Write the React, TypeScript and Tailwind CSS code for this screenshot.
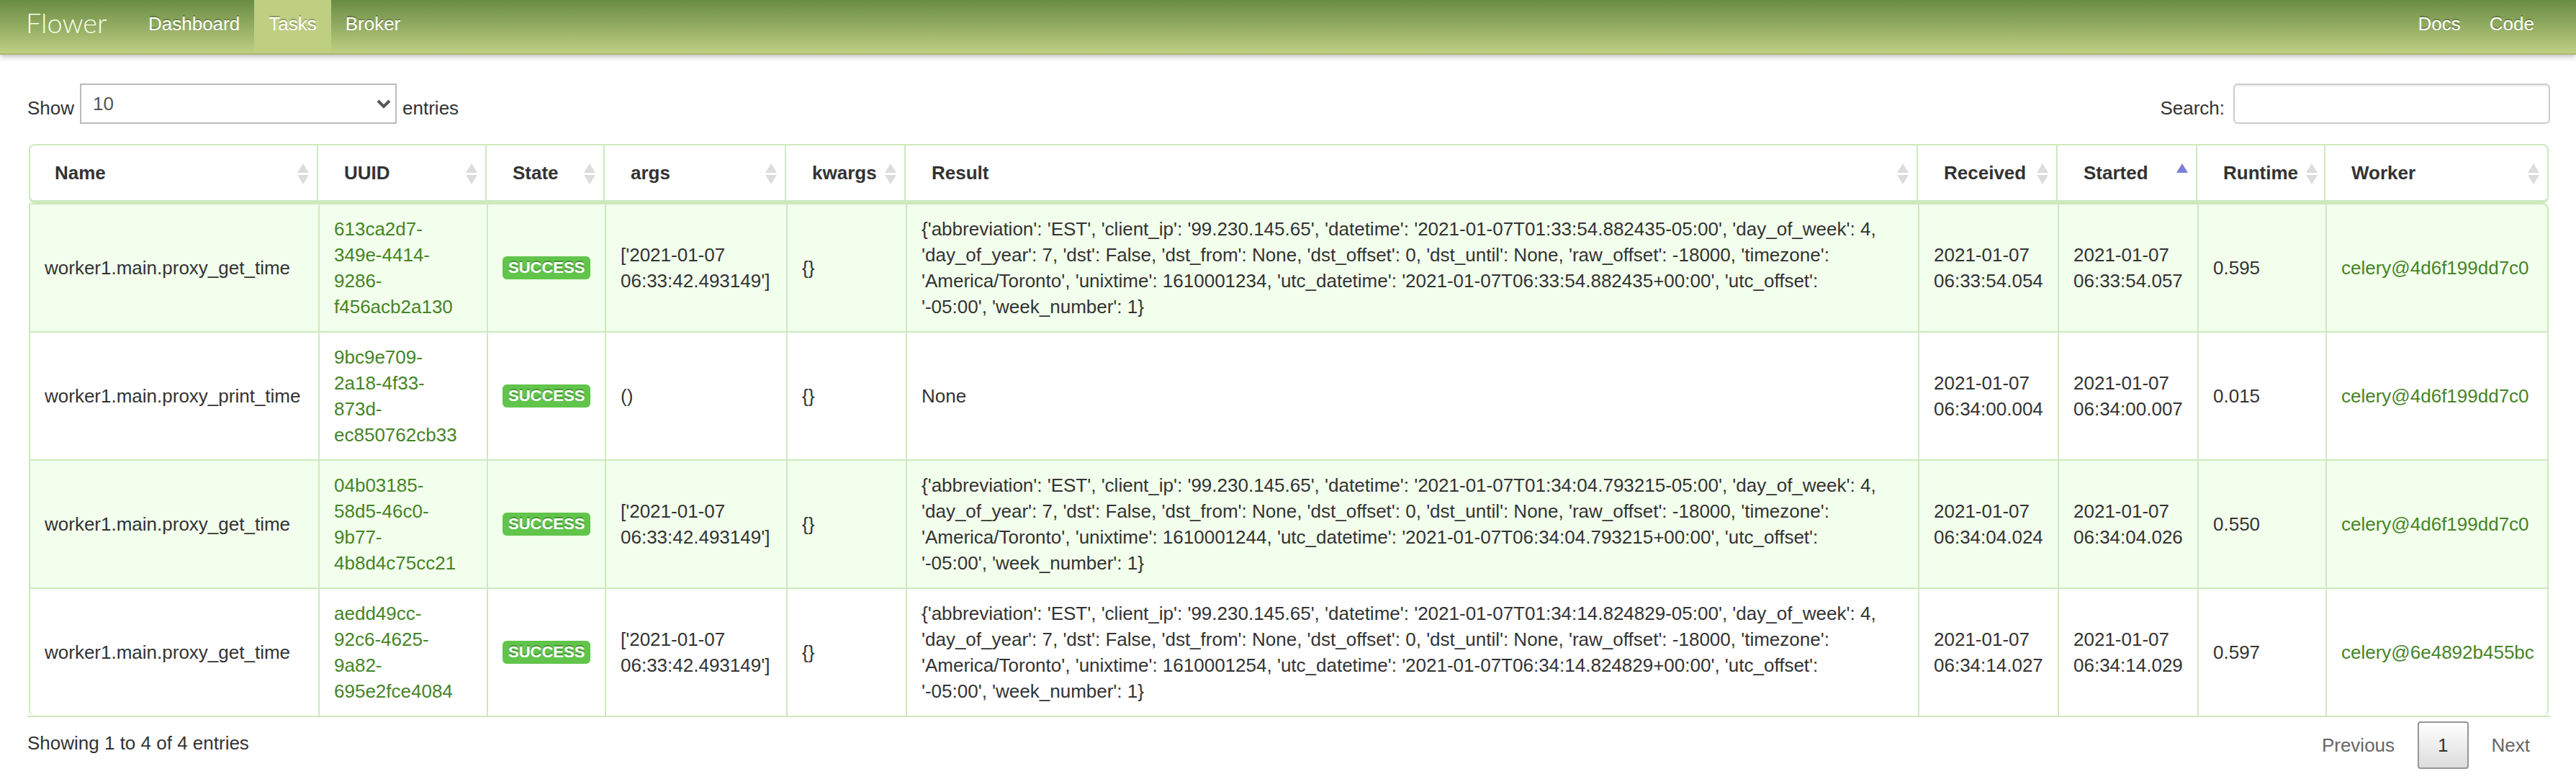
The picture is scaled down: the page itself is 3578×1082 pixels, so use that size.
import React from "react";

type SortState = "none" | "asc";

const columns: { label: string; width: string; sort: SortState }[] = [
  { label: "Name", width: "w-[402px]", sort: "none" },
  { label: "UUID", width: "w-[234px]", sort: "none" },
  { label: "State", width: "w-[164px]", sort: "none" },
  { label: "args", width: "w-[252px]", sort: "none" },
  { label: "kwargs", width: "w-[166px]", sort: "none" },
  { label: "Result", width: "w-auto", sort: "none" },
  { label: "Received", width: "w-[194px]", sort: "none" },
  { label: "Started", width: "w-[194px]", sort: "asc" },
  { label: "Runtime", width: "w-[178px]", sort: "none" },
  { label: "Worker", width: "w-[310px]", sort: "none" },
];

const ARGS = "['2021-01-07 06:33:42.493149']";

const result = (local: string, utc: string, unixtime: number) =>
  `{'abbreviation': 'EST', 'client_ip': '99.230.145.65', 'datetime': '${local}-05:00', 'day_of_week': 4, 'day_of_year': 7, 'dst': False, 'dst_from': None, 'dst_offset': 0, 'dst_until': None, 'raw_offset': -18000, 'timezone': 'America/Toronto', 'unixtime': ${unixtime}, 'utc_datetime': '${utc}+00:00', 'utc_offset': '-05:00', 'week_number': 1}`;

const tasks = [
  {
    name: "worker1.main.proxy_get_time",
    uuid: "613ca2d7-349e-4414-9286-f456acb2a130",
    args: ARGS,
    result: result("2021-01-07T01:33:54.882435", "2021-01-07T06:33:54.882435", 1610001234),
    received: "2021-01-07 06:33:54.054",
    started: "2021-01-07 06:33:54.057",
    runtime: "0.595",
    worker: "celery@4d6f199dd7c0",
  },
  {
    name: "worker1.main.proxy_print_time",
    uuid: "9bc9e709-2a18-4f33-873d-ec850762cb33",
    args: "()",
    result: "None",
    received: "2021-01-07 06:34:00.004",
    started: "2021-01-07 06:34:00.007",
    runtime: "0.015",
    worker: "celery@4d6f199dd7c0",
  },
  {
    name: "worker1.main.proxy_get_time",
    uuid: "04b03185-58d5-46c0-9b77-4b8d4c75cc21",
    args: ARGS,
    result: result("2021-01-07T01:34:04.793215", "2021-01-07T06:34:04.793215", 1610001244),
    received: "2021-01-07 06:34:04.024",
    started: "2021-01-07 06:34:04.026",
    runtime: "0.550",
    worker: "celery@4d6f199dd7c0",
  },
  {
    name: "worker1.main.proxy_get_time",
    uuid: "aedd49cc-92c6-4625-9a82-695e2fce4084",
    args: ARGS,
    result: result("2021-01-07T01:34:14.824829", "2021-01-07T06:34:14.824829", 1610001254),
    received: "2021-01-07 06:34:14.027",
    started: "2021-01-07 06:34:14.029",
    runtime: "0.597",
    worker: "celery@6e4892b455bc",
  },
];

function SortIcon({ state }: { state: SortState }) {
  return (
    <svg className="h-[38px] w-[38px] shrink-0" viewBox="0 0 38 38" aria-hidden="true">
      {state === "asc" ? (
        <path d="M19 6 L27 19 H11 Z" fill="#7b80d9" />
      ) : (
        <>
          <path d="M19 6 L27 19 H11 Z" fill="#dcdcdc" />
          <path d="M11 22 H27 L19 35 Z" fill="#dcdcdc" />
        </>
      )}
    </svg>
  );
}

function NavLink({ label, active = false }: { label: string; active?: boolean }) {
  return (
    <a
      href="#"
      aria-current={active ? "page" : undefined}
      className={
        active
          ? "flex items-center bg-[#bfcf82] px-5 pb-2 text-white [text-shadow:0_-2px_0_rgba(0,0,0,0.25)]"
          : "flex items-center px-5 pb-2 text-white [text-shadow:0_-2px_0_rgba(0,0,0,0.25)]"
      }
    >
      {label}
    </a>
  );
}

function Navbar() {
  return (
    <nav className="flex h-[76px] justify-between border-b-2 border-[#a9b973] bg-linear-to-b from-[#698c43] to-[#bfcf82] pr-[38px] pl-9 shadow-[0_2px_8px_rgba(0,0,0,0.3)]">
      <div className="flex">
        <a href="#" className="mr-9 flex w-[114px] items-center pb-3 font-[Lato] text-[38px] font-light text-[#f5ffe8]">
          Flower
        </a>
        <NavLink label="Dashboard" />
        <NavLink label="Tasks" active />
        <NavLink label="Broker" />
      </div>
      <div className="flex">
        <NavLink label="Docs" />
        <NavLink label="Code" />
      </div>
    </nav>
  );
}

const edges = "border-t-2 border-l-2 border-[#cde9bd] py-4 pl-5 last:border-r-2";
const cell = `${edges} pr-5`;
const lastCell = `${edges} pr-4`;

export default function App() {
  return (
    <div className="min-h-screen bg-white font-['Liberation_Sans',Arial,sans-serif] text-[26px] leading-9 text-[#333333]">
      <Navbar />
      <main className="px-9 pt-10">
        <div className="flex items-start justify-between pl-0.5">
          <div className="flex items-start gap-2">
            <label htmlFor="length" className="pt-4">
              Show
            </label>
            <div className="grid w-[440px] items-center">
              <select
                id="length"
                defaultValue="10"
                className="col-start-1 row-start-1 h-14 w-full appearance-none border-2 border-[#bbbbbb] bg-white px-4 text-[#555555]"
              >
                <option>10</option>
                <option>15</option>
                <option>20</option>
                <option>100</option>
              </select>
              <svg
                className="pointer-events-none col-start-1 row-start-1 mr-2 h-4 w-5 justify-self-end"
                viewBox="0 0 20 16"
                fill="none"
                stroke="#555555"
                strokeWidth="4"
                aria-hidden="true"
              >
                <path d="M2 4 L10 12 L18 4" />
              </svg>
            </div>
            <span className="pt-4">entries</span>
          </div>
          <div className="flex items-start gap-3">
            <label htmlFor="search" className="pt-4">
              Search:
            </label>
            <input
              id="search"
              type="search"
              className="h-14 w-[440px] rounded-md border-2 border-[#cccccc] bg-white px-3 shadow-[inset_0_2px_2px_rgba(0,0,0,0.075)]"
            />
          </div>
        </div>

        <div className="pt-7 pl-0.5">
          <table className="w-full table-fixed border-separate border-spacing-0 border-b-2 border-[#cde9bd] px-0.5">
            <colgroup>
              {columns.map((c) => (
                <col key={c.label} className={c.width} />
              ))}
            </colgroup>
            <thead>
              <tr>
                {columns.map((c) => (
                  <th
                    key={c.label}
                    scope="col"
                    aria-sort={c.sort === "asc" ? "ascending" : undefined}
                    className="border-t-2 border-r-2 border-b-4 border-[#cde9bd] p-0 pl-9 text-left font-bold first:rounded-l-lg first:border-l-2 first:pl-[34px] last:rounded-r-lg"
                  >
                    <button type="button" className="flex h-[76px] w-full items-center justify-between font-bold">
                      {c.label}
                      <SortIcon state={c.sort} />
                    </button>
                  </th>
                ))}
              </tr>
            </thead>
            <tbody className="[&>tr:first-child>td:last-child]:rounded-tr-lg [&>tr:last-child>td:first-child]:rounded-bl-lg [&>tr:last-child>td:last-child]:rounded-br-lg">
              {tasks.map((t) => (
                <tr key={t.uuid} className="odd:[&>td]:bg-[#f2ffec]">
                  <td className={cell}>{t.name}</td>
                  <td className={`${edges} pr-8`}>
                    <a href="#" className="text-[#468427]">
                      {t.uuid}
                    </a>
                  </td>
                  <td className={cell}>
                    <span className="block w-fit rounded-md bg-[#61c44b] px-2 py-0.5 text-[22px] leading-7 font-bold text-white [text-shadow:0_-2px_0_rgba(0,0,0,0.25)]">
                      SUCCESS
                    </span>
                  </td>
                  <td className={cell}>{t.args}</td>
                  <td className={cell}>{"{}"}</td>
                  <td className={`${edges} pr-11`}>{t.result}</td>
                  <td className={cell}>{t.received}</td>
                  <td className={cell}>{t.started}</td>
                  <td className={cell}>{t.runtime}</td>
                  <td className={lastCell}>
                    <a href="#" className="text-[#468427]">
                      {t.worker}
                    </a>
                  </td>
                </tr>
              ))}
            </tbody>
          </table>
        </div>

        <div className="flex items-start justify-between pt-1.5 pl-0.5">
          <p className="pt-3">Showing 1 to 4 of 4 entries</p>
          <div className="flex gap-1">
            <button type="button" className="h-[66px] px-7 text-[#666666]">
              Previous
            </button>
            <button
              type="button"
              aria-current="page"
              className="h-[66px] rounded-sm border-2 border-[#979797] bg-linear-to-b from-white to-[#dcdcdc] px-[26px]"
            >
              1
            </button>
            <button type="button" className="h-[66px] px-7 text-[#666666]">
              Next
            </button>
          </div>
        </div>
      </main>
    </div>
  );
}
